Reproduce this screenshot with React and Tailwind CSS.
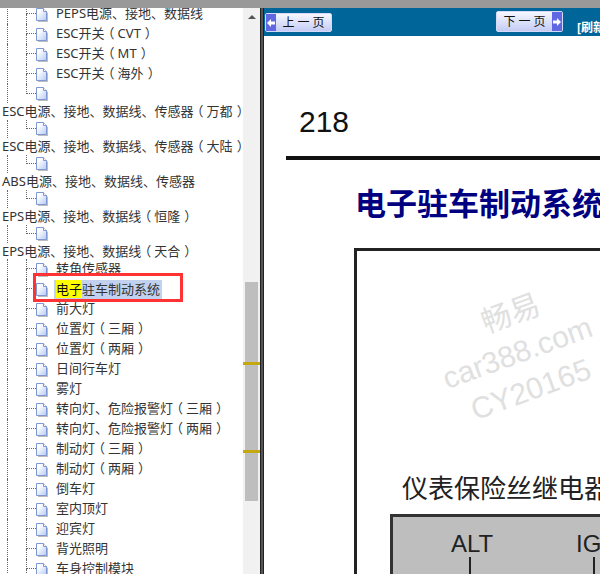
import React from 'react';

const treeRows = [
  { label: 'PEPS电源、接地、数据线' },
  { label: 'ESC开关（CVT）' },
  { label: 'ESC开关（MT）' },
  { label: 'ESC开关（海外）' },
  { label: '', short: true, end: true, tall: true },
  { heading: 'ESC电源、接地、数据线、传感器（万都）' },
  { label: '', short: true, end: true },
  { heading: 'ESC电源、接地、数据线、传感器（大陆）' },
  { label: '', short: true, end: true },
  { heading: 'ABS电源、接地、数据线、传感器' },
  { label: '', short: true, end: true },
  { heading: 'EPS电源、接地、数据线（恒隆）' },
  { label: '', short: true, end: true },
  { heading: 'EPS电源、接地、数据线（天合）' },
  { label: '转角传感器', first: true },
  { label: '驻车制动系统', match: '电子' },
  { label: '前大灯' },
  { label: '位置灯（三厢）' },
  { label: '位置灯（两厢）' },
  { label: '日间行车灯' },
  { label: '雾灯' },
  { label: '转向灯、危险报警灯（三厢）' },
  { label: '转向灯、危险报警灯（两厢）' },
  { label: '制动灯（三厢）' },
  { label: '制动灯（两厢）' },
  { label: '倒车灯' },
  { label: '室内顶灯' },
  { label: '迎宾灯' },
  { label: '背光照明' },
  { label: '车身控制模块' },
];

// the fullwidth brackets sit centred in their cell in the reference, so nudge them inwards from the cell edge
const withBrackets = (text) =>
  text.split(/([（）])/).map((part, i) => {
    if (part === '（') return <span key={i} className="inline-block -translate-x-[3px]">{part}</span>;
    if (part === '）') return <span key={i} className="inline-block translate-x-[4px]">{part}</span>;
    return part;
  });

const DocIcon = ({ lower }) => (
  <svg width="12" height="14" viewBox="0 0 12 14" className={`shrink-0 ${lower ? 'mt-[2px]' : ''}`}>
    <defs>
      <linearGradient id="docFill" x1="0" y1="0" x2="1" y2="1">
        <stop offset="0.25" stopColor="#ffffff" />
        <stop offset="1" stopColor="#b4caf4" />
      </linearGradient>
    </defs>
    <path d="M2 2H8L12 5V14H2Z" fill="#bdbdbd" />
    <path d="M0.5 0.5H7.5L10.5 3.5V12.5H0.5Z" fill="url(#docFill)" stroke="#7f97d2" />
    <path d="M7.5 0.5V3.5H10.5" fill="#ffffff" stroke="#7f97d2" />
  </svg>
);

const TreeRow = ({ row }) => {
  if (row.heading) {
    return (
      <div className="h-[17px] pl-[2px] flex items-center whitespace-nowrap text-[13px] text-[#333]">
        {withBrackets(row.heading)}
      </div>
    );
  }
  const rowHeight = row.tall ? 'h-[19px]' : row.short ? 'h-[18px]' : row.first ? 'h-[20px] -mt-[1px]' : 'h-[20px]';
  return (
    <div className={`flex items-center ${rowHeight}`}>
      <div className="ml-[7px] w-[19px] h-full border-l border-dotted border-[#666]" />
      <div className="w-[10px] h-full flex flex-col">
        <div className="h-1/2 border-l border-b border-dotted border-[#666]" />
        <div className={`h-1/2 ${row.end ? '' : 'border-l border-dotted border-[#666]'}`} />
      </div>
      <DocIcon lower={!row.short} />
      {row.label && (
        <span className={`whitespace-nowrap text-[13px] text-[#333] ${row.match ? 'ml-[6px] bg-[#c2d2ee] px-[2px] leading-[19px]' : 'ml-[8px]'}`}>
          {row.match && <span className="bg-[#ffff00] text-[#111]">{row.match}</span>}
          {withBrackets(row.label)}
        </span>
      )}
    </div>
  );
};

const Scrollbar = () => (
  <div className="relative w-[17px] shrink-0 bg-[#f1f1f1] flex flex-col items-center">
    <div className="h-[17px] flex items-center justify-center">
      <div className="w-0 h-0 border-x-[4px] border-x-transparent border-b-[4px] border-b-[#555]" />
    </div>
    <div className="mt-[257px] w-[13px] h-[219px] bg-[#bebebe]" />
    <div className="absolute left-0 top-[354px] w-full h-[3px] bg-[#c4a810]" />
    <div className="absolute left-0 top-[442px] w-full h-[3px] bg-[#c4a810]" />
  </div>
);

const PageButton = ({ label, next }) => (
  <div className={`w-[67px] flex items-stretch rounded-[2px] border border-[#d4daf8] bg-gradient-to-b from-[#f6f7ff] to-[#c4ccf4] ${next ? 'h-[21px] flex-row-reverse' : 'h-[19px]'}`}>
    <div className="w-[10px] bg-[#5f68e0] flex items-center justify-center">
      <svg width="8" height="8" viewBox="0 0 8 8" className={next ? '' : 'rotate-180'}>
        <path d="M0 2.5H4V0L8 4L4 8V5.5H0Z" fill="#ffffff" />
      </svg>
    </div>
    <div className="flex-1 flex items-center justify-center text-[12px] text-[#111] whitespace-pre">{label}</div>
  </div>
);

export default function App() {
  return (
    <div className="h-[574px] w-[600px] overflow-hidden flex flex-col bg-white font-['Noto_Sans','Noto_Sans_CJK_SC',sans-serif]">
      <div className="h-[8px] shrink-0 bg-[#999999]" />
      <div className="flex-1 min-h-0 flex">
        <div className="relative w-[260px] shrink-0 flex overflow-hidden">
          <div className="w-[243px] shrink-0 -mt-[4px]">
            {treeRows.map((row, i) => (
              <TreeRow key={i} row={row} />
            ))}
          </div>
          <Scrollbar />
          <div className="absolute left-[33px] top-[265px] w-[150px] h-[29px] border-[3px] border-[#ff3333]" />
        </div>
        <div className="w-[4px] shrink-0 bg-[#555] border-x border-[#222]" />
        <div className="relative flex-1 min-w-0 overflow-hidden">
          <div className="h-[28px] bg-[#006699] relative flex">
            <div className="ml-[1px] mt-[5px]">
              <PageButton label="上 一 页" />
            </div>
            <div className="ml-[164px] mt-[3px]">
              <PageButton label="下 一 页" next />
            </div>
            <div className="ml-[14px] mt-[12px] text-[12px] leading-[16px] font-bold text-white whitespace-nowrap">[刷新页面]</div>
          </div>
          <div className="ml-[35px] mt-[66px] text-[30px] leading-[40px] text-[#111] font-['Liberation_Sans',sans-serif]">218</div>
          <div className="ml-[22px] mt-[14px] h-[4px] w-[400px] bg-[#111]" />
          <div className="ml-[91px] mt-[23px] text-[31px] leading-[40px] font-bold text-[#000080] whitespace-nowrap">电子驻车制动系统</div>
          <div className="ml-[90px] mt-[25px] w-[400px] h-[400px] border-l-[3px] border-t-[3px] border-[#222]">
            <div className="ml-[45px] mt-[220px] text-[26px] leading-[34px] text-[#222] whitespace-nowrap">仪表保险丝继电器</div>
            <div className="ml-[33px] mt-[9px] w-[400px] h-[200px] border-l-[3px] border-t-[3px] border-[#333] bg-[#bebebe] flex font-['Liberation_Sans',sans-serif] text-[24px] text-[#222]">
              <div className="ml-[58px] mt-[12px] w-[43px] flex flex-col">
                <span className="leading-[30px]">ALT</span>
                <div className="ml-[18px] -mt-[2px] w-[2px] h-[20px] bg-[#222]" />
              </div>
              <div className="ml-[82px] mt-[12px] flex flex-col">
                <span className="leading-[30px]">IG</span>
                <div className="ml-[17px] -mt-[2px] w-[2px] h-[20px] bg-[#222]" />
              </div>
            </div>
          </div>
          <div className="absolute left-[175px] top-[286px] -rotate-[20deg] text-[#e0e0e0] flex flex-col items-center text-[30px] leading-[39px] font-['Liberation_Sans','Noto_Sans_CJK_SC',sans-serif] whitespace-nowrap">
            <span className="ml-[14px]">畅易</span>
            <span>car388.com</span>
            <span>CY20165</span>
          </div>
        </div>
      </div>
    </div>
  );
}
